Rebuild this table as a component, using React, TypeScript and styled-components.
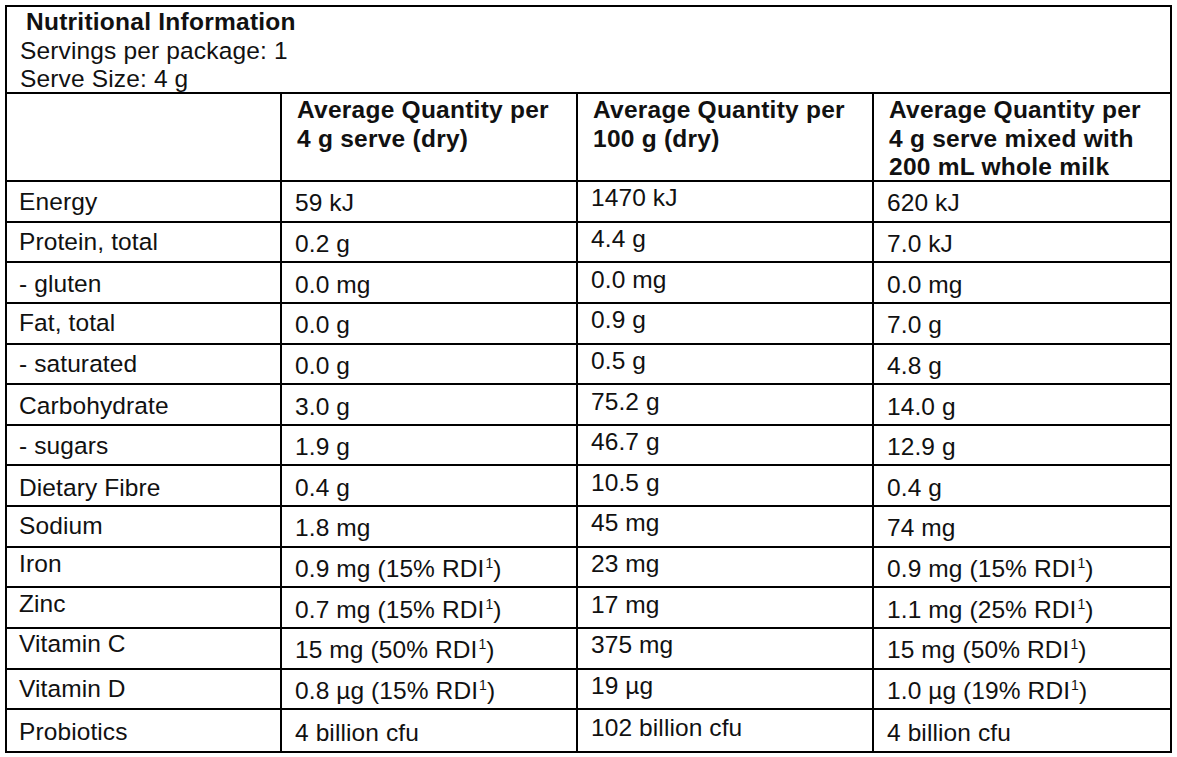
import React from "react"
import styled, { createGlobalStyle } from "styled-components"

const GlobalStyle = createGlobalStyle`
  html, body {
    margin: 0;
    padding: 0;
    background: #fff;
  }
  body {
    font-family: "Liberation Sans", Arial, sans-serif;
    color: #111;
  }
`

// [label, per 4 g dry, per 100 g dry, per 4 g mixed, label shift]
const rows: [string, string, string, string, number][] = [
  ["Energy", "59 kJ", "1470 kJ", "620 kJ", 1],
  ["Protein, total", "0.2 g", "4.4 g", "7.0 kJ", 0],
  ["- gluten", "0.0 mg", "0.0 mg", "0.0 mg", 1],
  ["Fat, total", "0.0 g", "0.9 g", "7.0 g", 0],
  ["- saturated", "0.0 g", "0.5 g", "4.8 g", 0],
  ["Carbohydrate", "3.0 g", "75.2 g", "14.0 g", 1],
  ["- sugars", "1.9 g", "46.7 g", "12.9 g", 1],
  ["Dietary Fibre", "0.4 g", "10.5 g", "0.4 g", 2],
  ["Sodium", "1.8 mg", "45 mg", "74 mg", 0],
  ["Iron", "0.9 mg (15% RDI^)", "23 mg", "0.9 mg (15% RDI^)", -3],
  ["Zinc", "0.7 mg (15% RDI^)", "17 mg", "1.1 mg (25% RDI^)", -4],
  ["Vitamin C", "15 mg (50% RDI^)", "375 mg", "15 mg (50% RDI^)", -4],
  ["Vitamin D", "0.8 µg (15% RDI^)", "19 µg", "1.0 µg (19% RDI^)", 0],
  ["Probiotics", "4 billion cfu", "102 billion cfu", "4 billion cfu", 1],
]

// vertical nudge of each value column, as in the printed label
const colShift = [0, 2, -3, 2]

const renderValue = (text: string) => {
  if (!text.includes("^")) return text
  const [before, after] = text.split("^")
  return (
    <span>
      {before}
      <Sup>1</Sup>
      {after}
    </span>
  )
}

const App = () => {
  return (
    <>
      <GlobalStyle />
      <Panel>
        <Intro>
          <Title>Nutritional Information</Title>
          <IntroLine>Servings per package: 1</IntroLine>
          <IntroLine>Serve Size: 4 g</IntroLine>
        </Intro>
        <Grid>
          <HeadCell $lastCol={false} />
          <HeadCell $lastCol={false}>
            Average Quantity per
            <br />4 g serve (dry)
          </HeadCell>
          <HeadCell $lastCol={false}>
            Average Quantity per
            <br />100 g (dry)
          </HeadCell>
          <HeadCell $lastCol>
            Average Quantity per
            <br />4 g serve mixed with
            <br />200 mL whole milk
          </HeadCell>
          {rows.map((row, r) =>
            [row[0], row[1], row[2], row[3]].map((value, c) => (
              <Cell
                key={`${r}-${c}`}
                $lastCol={c === 3}
                $lastRow={r === rows.length - 1}
                $first={c === 0}
                $shift={c === 0 ? row[4] : colShift[c]}
              >
                {renderValue(value)}
              </Cell>
            ))
          )}
        </Grid>
      </Panel>
    </>
  )
}
export default App

const Panel = styled.div`
  box-sizing: border-box;
  margin: 5px 0 0 5px;
  width: 1167px;
  height: 748px;
  border: 2px solid #000;
  display: flex;
  flex-direction: column;
`

const Intro = styled.div`
  box-sizing: border-box;
  height: 87px;
  border-bottom: 2px solid #000;
  padding: 1px 0 0 13px;
  font-size: 24.5px;
  line-height: 28.5px;
  letter-spacing: 0.15px;
  overflow: hidden;
`

const Title = styled.div`
  font-weight: bold;
  padding-left: 6px;
  letter-spacing: 0.25px;
`

const IntroLine = styled.div``

const Grid = styled.div`
  flex: 1;
  display: grid;
  grid-template-columns: 275px 296px 296px 1fr;
  grid-template-rows: 88px repeat(14, 1fr);
`

const HeadCell = styled.div<{ $lastCol: boolean }>`
  box-sizing: border-box;
  border-bottom: 2px solid #000;
  border-right: ${(p) => (p.$lastCol ? "none" : "2px solid #000")};
  padding: 2px 0 0 15px;
  font-size: 24.5px;
  font-weight: bold;
  line-height: 28.5px;
  letter-spacing: 0.25px;
`

const Cell = styled.div<{
  $lastCol: boolean
  $lastRow: boolean
  $first: boolean
  $shift: number
}>`
  box-sizing: border-box;
  display: flex;
  align-items: center;
  border-bottom: ${(p) => (p.$lastRow ? "none" : "2px solid #000")};
  border-right: ${(p) => (p.$lastCol ? "none" : "2px solid #000")};
  padding-left: ${(p) => (p.$first ? 12 : 13)}px;
  padding-top: ${(p) => Math.max(0, p.$shift * 2)}px;
  padding-bottom: ${(p) => Math.max(0, -p.$shift * 2)}px;
  font-size: 24.5px;
  line-height: 28px;
  letter-spacing: 0.1px;
  white-space: nowrap;
`

const Sup = styled.span`
  display: inline-block;
  font-size: 14px;
  line-height: 14px;
  vertical-align: 9px;
  letter-spacing: 0;
  margin-left: 1px;
`
